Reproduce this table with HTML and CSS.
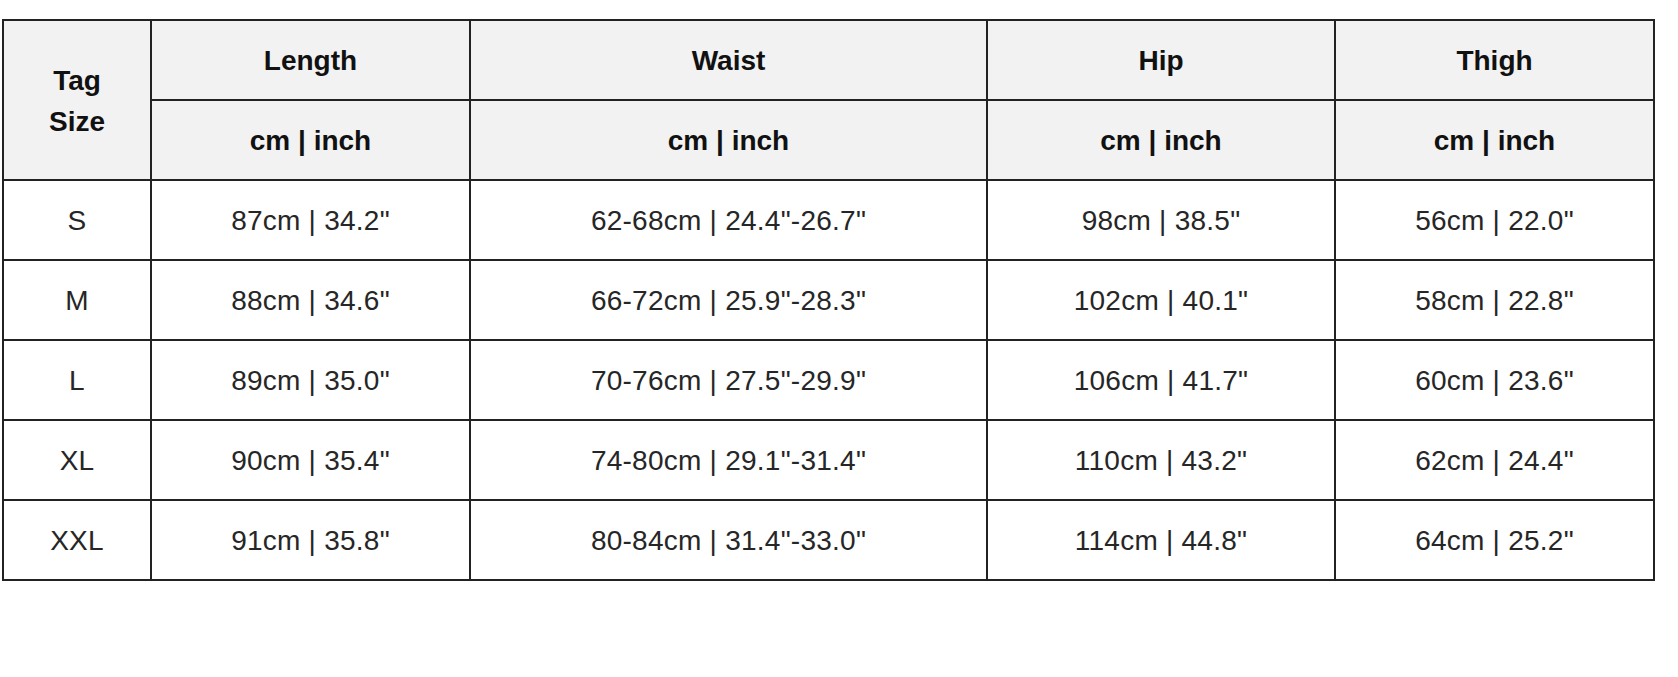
FILE: index.html
```html
<!DOCTYPE html>
<html>
<head>
<meta charset="utf-8">
<link rel="stylesheet" href="styles.css">
</head>
<body>
<table class="size-table">
  <colgroup>
    <col class="c-tag">
    <col class="c-length">
    <col class="c-waist">
    <col class="c-hip">
    <col class="c-thigh">
  </colgroup>
  <thead>
    <tr>
      <th rowspan="2" class="tag">Tag<br>Size</th>
      <th>Length</th>
      <th>Waist</th>
      <th>Hip</th>
      <th>Thigh</th>
    </tr>
    <tr>
      <th>cm | inch</th>
      <th>cm | inch</th>
      <th>cm | inch</th>
      <th>cm | inch</th>
    </tr>
  </thead>
  <tbody>
    <tr><td>S</td><td>87cm | 34.2"</td><td>62-68cm | 24.4"-26.7"</td><td>98cm | 38.5"</td><td>56cm | 22.0"</td></tr>
    <tr><td>M</td><td>88cm | 34.6"</td><td>66-72cm | 25.9"-28.3"</td><td>102cm | 40.1"</td><td>58cm | 22.8"</td></tr>
    <tr><td>L</td><td>89cm | 35.0"</td><td>70-76cm | 27.5"-29.9"</td><td>106cm | 41.7"</td><td>60cm | 23.6"</td></tr>
    <tr><td>XL</td><td>90cm | 35.4"</td><td>74-80cm | 29.1"-31.4"</td><td>110cm | 43.2"</td><td>62cm | 24.4"</td></tr>
    <tr><td>XXL</td><td>91cm | 35.8"</td><td>80-84cm | 31.4"-33.0"</td><td>114cm | 44.8"</td><td>64cm | 25.2"</td></tr>
  </tbody>
</table>
</body>
</html>
```
FILE: styles.css
```css
html, body {
  margin: 0;
  padding: 0;
  background: #ffffff;
}
body {
  padding: 19px 0 0 2px;
  font-family: "Liberation Sans", Arial, sans-serif;
}
.size-table {
  border-collapse: collapse;
  table-layout: fixed;
  width: 1653px;
  font-size: 28px;
  color: #262626;
}
.c-tag { width: 148px; }
.c-length { width: 319px; }
.c-waist { width: 517px; }
.c-hip { width: 348px; }
.c-thigh { width: 319px; }
.size-table th,
.size-table td {
  border: 2px solid #222222;
  text-align: center;
  vertical-align: middle;
  padding: 1px 0 0 0;
  height: 75px;
}
.size-table td {
  letter-spacing: 0.25px;
}
.size-table tr {
  height: 80px;
}
.size-table th {
  background: #f2f2f2;
  font-weight: bold;
  color: #111111;
}
.size-table th.tag {
  line-height: 41px;
}
```
